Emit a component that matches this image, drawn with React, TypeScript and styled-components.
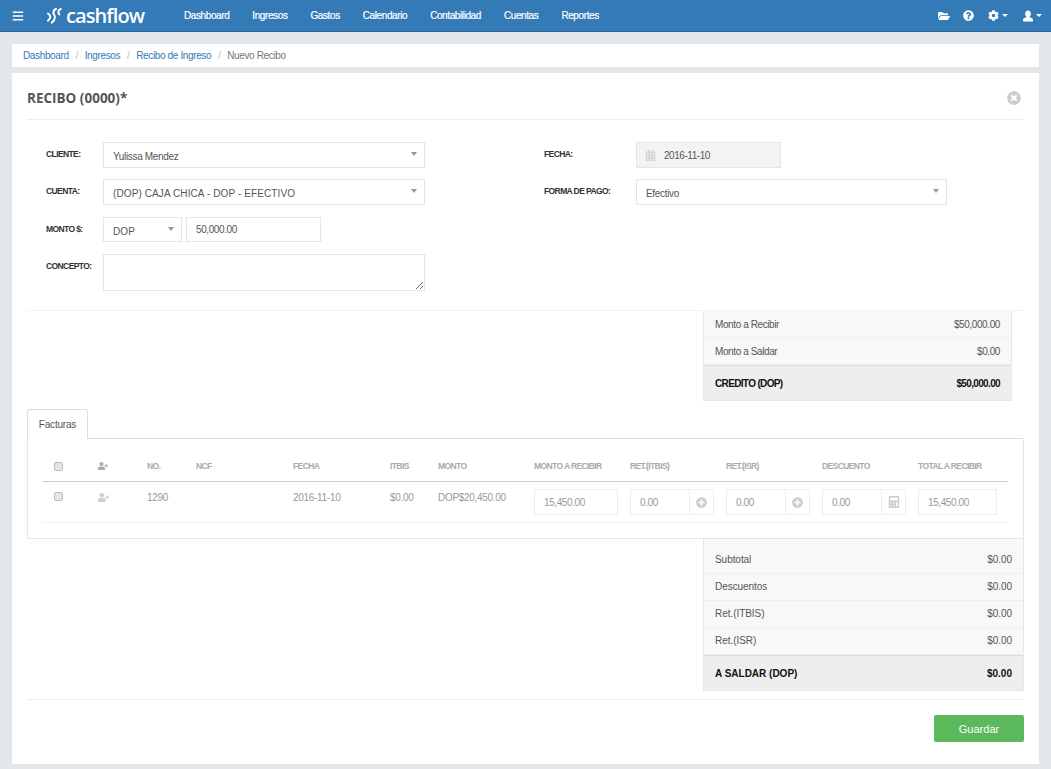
import React from "react";
import styled, { createGlobalStyle } from "styled-components";
import {
  FaBars, FaCalculator, FaCalendarAlt, FaCog, FaFolderOpen, FaPlusCircle,
  FaQuestionCircle, FaTimesCircle, FaUserPlus,
} from "react-icons/fa";

const Global = createGlobalStyle`
  * { box-sizing: border-box; }
  html, body { margin: 0; padding: 0; background: #e4e7ea; }
  body { font-family: "Liberation Sans", Arial, sans-serif; font-size: 10px; color: #555; }
`;

const Page = styled.div`width: 1051px; height: 769px; overflow: hidden;`;

const Navbar = styled.header`
  height: 32px; background: #337ab7; border-bottom: 1px solid #2a659a;
  display: flex; align-items: center; color: #fff;
`;
const Burger = styled.span`display: flex; width: 47px; padding-left: 12px; font-size: 12px;`;
const Logo = styled.div`display: flex; align-items: center; width: 137px; gap: 4px;`;
const LogoText = styled.span`
  font-family: "Open Sans", sans-serif; font-weight: 600; font-size: 20px; letter-spacing: -0.9px; line-height: 1;
`;
const NavLinks = styled.nav`display: flex; gap: 23px;`;
const NavLink = styled.a`font-size: 10px; letter-spacing: -0.4px; color: #fff; -webkit-text-stroke: 0.2px #fff;`;
const NavIcons = styled.div`margin-left: auto; display: flex; align-items: center; padding-right: 8px; font-size: 12px;`;
const NavIcon = styled.span<{ $w: number; $size?: number }>`
  display: flex; align-items: center; width: ${p => p.$w}px; font-size: ${p => p.$size ?? 12}px;
`;
const WhiteCaret = styled.i`
  margin-left: 3px; border-top: 3px solid #fff; border-left: 3px solid transparent; border-right: 3px solid transparent;
`;

const Breadcrumb = styled.div`
  margin: 12px 12px 6px; height: 23px; background: #fff; display: flex; align-items: center; padding-left: 11px;
  font-size: 10px; letter-spacing: -0.36px;
`;
const Crumb = styled.a`color: #337ab7;`;
const Sep = styled.span`color: #bbb; width: 16px; text-align: center;`;
const Current = styled.span`color: #777;`;

const Card = styled.main`margin: 0 12px; height: 691px; background: #fff; padding: 0 15px; display: flow-root;`;
const CardHead = styled.div`
  height: 47px; border-bottom: 1px solid #eee; display: flex; align-items: center; justify-content: space-between; padding-top: 3px;
`;
const Title = styled.h1`margin: 0; font: 700 13.5px "Open Sans", sans-serif; color: #555;`;
const CloseIcon = styled.span`display: flex; color: #ccc; font-size: 14px; margin-right: 3px; margin-top: 1px;`;

const FormArea = styled.section`
  padding: 22px 0 19px 19px; border-bottom: 1px solid #f2f2f2; display: grid; grid-template-columns: 498px 1fr;
`;
const Col = styled.div``;
const Row = styled.div<{ $mb?: number; $label: number }>`
  display: flex; margin-bottom: ${p => p.$mb ?? 0}px;
  > label { width: ${p => p.$label}px; flex: none; }
`;
const Label = styled.label`
  font-size: 8.5px; letter-spacing: -0.6px; font-weight: 700; color: #333; padding-top: 7px; line-height: 11px;
`;
const Select = styled.div<{ $w: number; $h?: number; $mr?: number; $ls?: number }>`
  width: ${p => p.$w}px; height: ${p => p.$h ?? 26}px; margin-right: ${p => p.$mr ?? 0}px;
  border: 1px solid #e5e5e5; display: flex; align-items: center; padding: 3px 9px 0; color: #555; font-size: 10px;
  letter-spacing: ${p => p.$ls ?? -0.33}px; position: relative;
  &::after {
    content: ""; position: absolute; right: 7px; top: 9px;
    border-top: 4px solid #999; border-left: 3px solid transparent; border-right: 3px solid transparent;
  }
`;
const TextInput = styled.input<{ $w: number; $h?: number; $pl?: number }>`
  width: ${p => p.$w}px; height: ${p => p.$h ?? 26}px; border: 1px solid #e5e5e5; padding: 0 0 0 ${p => p.$pl ?? 9}px;
  font: 10px "Liberation Sans", Arial, sans-serif; letter-spacing: -0.4px; color: #555; outline: none; background: #fff;
`;
const Concept = styled.textarea`
  width: 322px; height: 37px; border: 1px solid #e5e5e5; outline: none; margin: 0; display: block; background: #fff;
`;
const DateBox = styled.div`
  width: 145px; height: 26px; background: #f3f3f3; border: 1px solid #e5e5e5; display: flex; align-items: center;
  padding-left: 8px; gap: 8px; color: #555; font-size: 10px; letter-spacing: -0.45px;
  svg { color: #d4d4d4; font-size: 11px; flex: none; }
`;

const Summary = styled.div<{ $w: number; $mr?: number; $pt?: number; $ls: number; $lsTotal: number }>`
  width: ${p => p.$w}px; margin-left: auto; margin-right: ${p => p.$mr ?? 0}px; padding-top: ${p => p.$pt ?? 0}px;
  background: #f8f8f8; border: 1px solid #e8e8e8; border-top: 0; font-size: 10px; letter-spacing: ${p => p.$ls}px;
  > b { letter-spacing: ${p => p.$lsTotal}px; }
`;
const SumRow = styled.div<{ $lift?: boolean }>`
  height: 27px; display: flex; justify-content: space-between; align-items: center; padding: 0 11px ${p => (p.$lift ? 2 : 0)}px; color: #555;
  border-bottom: 1px solid #eee;
`;
const SumTotal = styled.b`
  height: 35px; display: flex; justify-content: space-between; align-items: center; padding: 0 11px; color: #111; font-weight: 700;
  background: #eeeeee; border-top: 1px solid #ddd;
`;

const Tabs = styled.div`margin-top: 8px; height: 30px; display: flex; position: relative; z-index: 1;`;
const Tab = styled.div`
  width: 61px; height: 30px; background: #fff; border: 1px solid #ddd; border-bottom: 0; border-radius: 3px 3px 0 0;
  display: flex; align-items: center; justify-content: center; color: #555; font-size: 10px; letter-spacing: -0.2px;
`;
const TabBody = styled.div`
  margin-top: -1px; height: 101px; border: 1px solid #e6e6e6; border-top-color: #ddd; padding: 0 15px;
`;
const COLS = "54px 50px 49px 97px 97px 48px 96px 96px 96px 96px 96px 90px";
const THead = styled.div`
  display: grid; grid-template-columns: ${COLS}; height: 43px; align-items: end; padding-bottom: 10px; border-bottom: 1px solid #ccc;
  font-size: 8.5px; letter-spacing: -0.6px; font-weight: 700; color: #aaa;
`;
const TRow = styled.div`
  display: grid; grid-template-columns: ${COLS}; height: 41px; align-items: start; border-bottom: 1px solid #f0f0f0;
  color: #999; font-size: 10px; letter-spacing: -0.3px; padding-top: 7px;
`;
const Cell = styled.div<{ $t?: number }>`padding-top: ${p => p.$t ?? 0}px; color: inherit; display: flex;`;
const CheckCell = styled(Cell)`padding-left: 11px;`;
const IconCell = styled(Cell)`padding-left: 1px;`;
const Check = styled.input`
  margin: 0; width: 9px; height: 9px; appearance: none; background: #e6e6e6; border: 1px solid #bbb; border-radius: 2px;
`;
const HeadIcon = styled.span`display: flex; color: #aaa; font-size: 10px;`;
const RowIcon = styled.span`display: flex; color: #ccc; font-size: 11px;`;
const Group = styled.div`display: flex;`;
const AddOn = styled.span<{ $w: number; $size?: number }>`
  width: ${p => p.$w}px; height: 26px; border: 1px solid #eee; margin-left: -1px; border-radius: 0 3px 3px 0;
  display: flex; align-items: center; justify-content: center; color: #ccc; font-size: ${p => p.$size ?? 11}px;
`;
const FadedInput = styled(TextInput)`border-color: #eee; color: #999;`;

const FootRule = styled.div`margin-top: 8px; border-top: 1px solid #eee;`;
const Actions = styled.div`display: flex; justify-content: flex-end; padding-top: 15px;`;
const SaveButton = styled.button`
  width: 90px; height: 27px; border: 0; border-radius: 2px; background: #5cb85c; color: #fff;
  font: 11px "Liberation Sans", Arial, sans-serif;
`;

const LogoMark = () => (
  <svg width="15" height="16" viewBox="47 6 15 16" fill="none" stroke="#fff" strokeWidth="2" strokeLinecap="round">
    <path d="M48 11.500c1.600 1 2.400 2.100 2.300 3.400-.1 1.300-.9 2.500-2.400 3.800" />
    <path d="M56 7c-1.900.9-2.800 2.200-2.600 3.800.2 1.900 1.700 2.700 1.500 4.800-.1 1.900-1.200 3.500-3.200 5" />
    <path d="M60.800 7c-1.500.5-2.400 1.500-2.500 2.800 0 1 .3 1.800.9 2.600" />
  </svg>
);

const UserBust = () => (
  <svg width="10" height="12" viewBox="0 0 10 12" fill="#fff">
    <path d="M5 0.5c1.800 0 2.900 1.400 2.900 3.200 0 1.200-.5 2.300-1.200 2.900-.2.4 0 .8.5 1 1.200.4 2.800.7 2.800 2.300V11c0 .3-.2.5-.5.5H.5C.2 11.500 0 11.300 0 11V9.900c0-1.600 1.600-1.900 2.800-2.300.5-.2.7-.6.5-1C2.600 6 2.100 4.900 2.100 3.700 2.100 1.900 3.200.5 5 .5z" />
  </svg>
);

const navItems = ["Dashboard", "Ingresos", "Gastos", "Calendario", "Contabilidad", "Cuentas", "Reportes"];

export default function App() {
  return (
    <Page>
      <Global />
      <Navbar>
        <Burger><FaBars /></Burger>
        <Logo><LogoMark /><LogoText>cashflow</LogoText></Logo>
        <NavLinks>{navItems.map(n => <NavLink key={n}>{n}</NavLink>)}</NavLinks>
        <NavIcons>
          <NavIcon $w={25}><FaFolderOpen /></NavIcon>
          <NavIcon $w={25} $size={11}><FaQuestionCircle /></NavIcon>
          <NavIcon $w={35} $size={11}><FaCog /><WhiteCaret /></NavIcon>
          <NavIcon $w={20}><UserBust /><WhiteCaret /></NavIcon>
        </NavIcons>
      </Navbar>

      <Breadcrumb>
        <Crumb>Dashboard</Crumb><Sep>/</Sep>
        <Crumb>Ingresos</Crumb><Sep>/</Sep>
        <Crumb>Recibo de Ingreso</Crumb><Sep>/</Sep>
        <Current>Nuevo Recibo</Current>
      </Breadcrumb>

      <Card>
        <CardHead>
          <Title>RECIBO (0000)*</Title>
          <CloseIcon><FaTimesCircle /></CloseIcon>
        </CardHead>

        <FormArea>
          <Col>
            <Row $label={57} $mb={11}><Label>CLIENTE:</Label><Select $w={322}>Yulissa Mendez</Select></Row>
            <Row $label={57} $mb={12}><Label>CUENTA:</Label><Select $w={322} $ls={0.1}>(DOP) CAJA CHICA - DOP - EFECTIVO</Select></Row>
            <Row $label={57} $mb={12}>
              <Label>MONTO $:</Label>
              <Select $w={79} $h={25} $mr={4} $ls={0.1}>DOP</Select>
              <TextInput $w={135} $h={25} readOnly value="50,000.00" />
            </Row>
            <Row $label={57}><Label>CONCEPTO:</Label><Concept readOnly /></Row>
          </Col>
          <Col>
            <Row $label={92} $mb={11}>
              <Label>FECHA:</Label>
              <DateBox><FaCalendarAlt />2016-11-10</DateBox>
            </Row>
            <Row $label={92}><Label>FORMA DE PAGO:</Label><Select $w={311}>Efectivo</Select></Row>
          </Col>
        </FormArea>

        <Summary $w={309} $mr={12} $ls={-0.4} $lsTotal={-0.65}>
          <SumRow><span>Monto a Recibir</span><span>$50,000.00</span></SumRow>
          <SumRow><span>Monto a Saldar</span><span>$0.00</span></SumRow>
          <SumTotal><span>CREDITO (DOP)</span><span>$50,000.00</span></SumTotal>
        </Summary>

        <Tabs><Tab>Facturas</Tab></Tabs>
        <TabBody>
          <THead>
            <CheckCell><Check type="checkbox" readOnly /></CheckCell>
            <IconCell><HeadIcon><FaUserPlus /></HeadIcon></IconCell>
            <Cell>NO.</Cell><Cell>NCF</Cell><Cell>FECHA</Cell><Cell>ITBIS</Cell><Cell>MONTO</Cell>
            <Cell>MONTO A RECIBIR</Cell><Cell>RET.(ITBIS)</Cell><Cell>RET.(ISR)</Cell><Cell>DESCUENTO</Cell><Cell>TOTAL A RECIBIR</Cell>
          </THead>
          <TRow>
            <CheckCell $t={3}><Check type="checkbox" readOnly /></CheckCell>
            <IconCell $t={3}><RowIcon><FaUserPlus /></RowIcon></IconCell>
            <Cell $t={3}>1290</Cell><Cell />
            <Cell $t={3}>2016-11-10</Cell>
            <Cell $t={3}>$0.00</Cell>
            <Cell $t={3}>DOP$20,450.00</Cell>
            <Cell><FadedInput $w={84} readOnly value="15,450.00" /></Cell>
            <Cell><Group><FadedInput $w={60} readOnly value="0.00" /><AddOn $w={25}><FaPlusCircle /></AddOn></Group></Cell>
            <Cell><Group><FadedInput $w={60} readOnly value="0.00" /><AddOn $w={25}><FaPlusCircle /></AddOn></Group></Cell>
            <Cell><Group><FadedInput $w={60} readOnly value="0.00" /><AddOn $w={25} $size={12}><FaCalculator /></AddOn></Group></Cell>
            <Cell><FadedInput $w={79} readOnly value="15,450.00" /></Cell>
          </TRow>
        </TabBody>

        <Summary $w={321} $pt={8} $ls={-0.05} $lsTotal={0}>
          <SumRow $lift><span>Subtotal</span><span>$0.00</span></SumRow>
          <SumRow $lift><span>Descuentos</span><span>$0.00</span></SumRow>
          <SumRow $lift><span>Ret.(ITBIS)</span><span>$0.00</span></SumRow>
          <SumRow $lift><span>Ret.(ISR)</span><span>$0.00</span></SumRow>
          <SumTotal><span>A SALDAR (DOP)</span><span>$0.00</span></SumTotal>
        </Summary>

        <FootRule />
        <Actions><SaveButton>Guardar</SaveButton></Actions>
      </Card>
    </Page>
  );
}
